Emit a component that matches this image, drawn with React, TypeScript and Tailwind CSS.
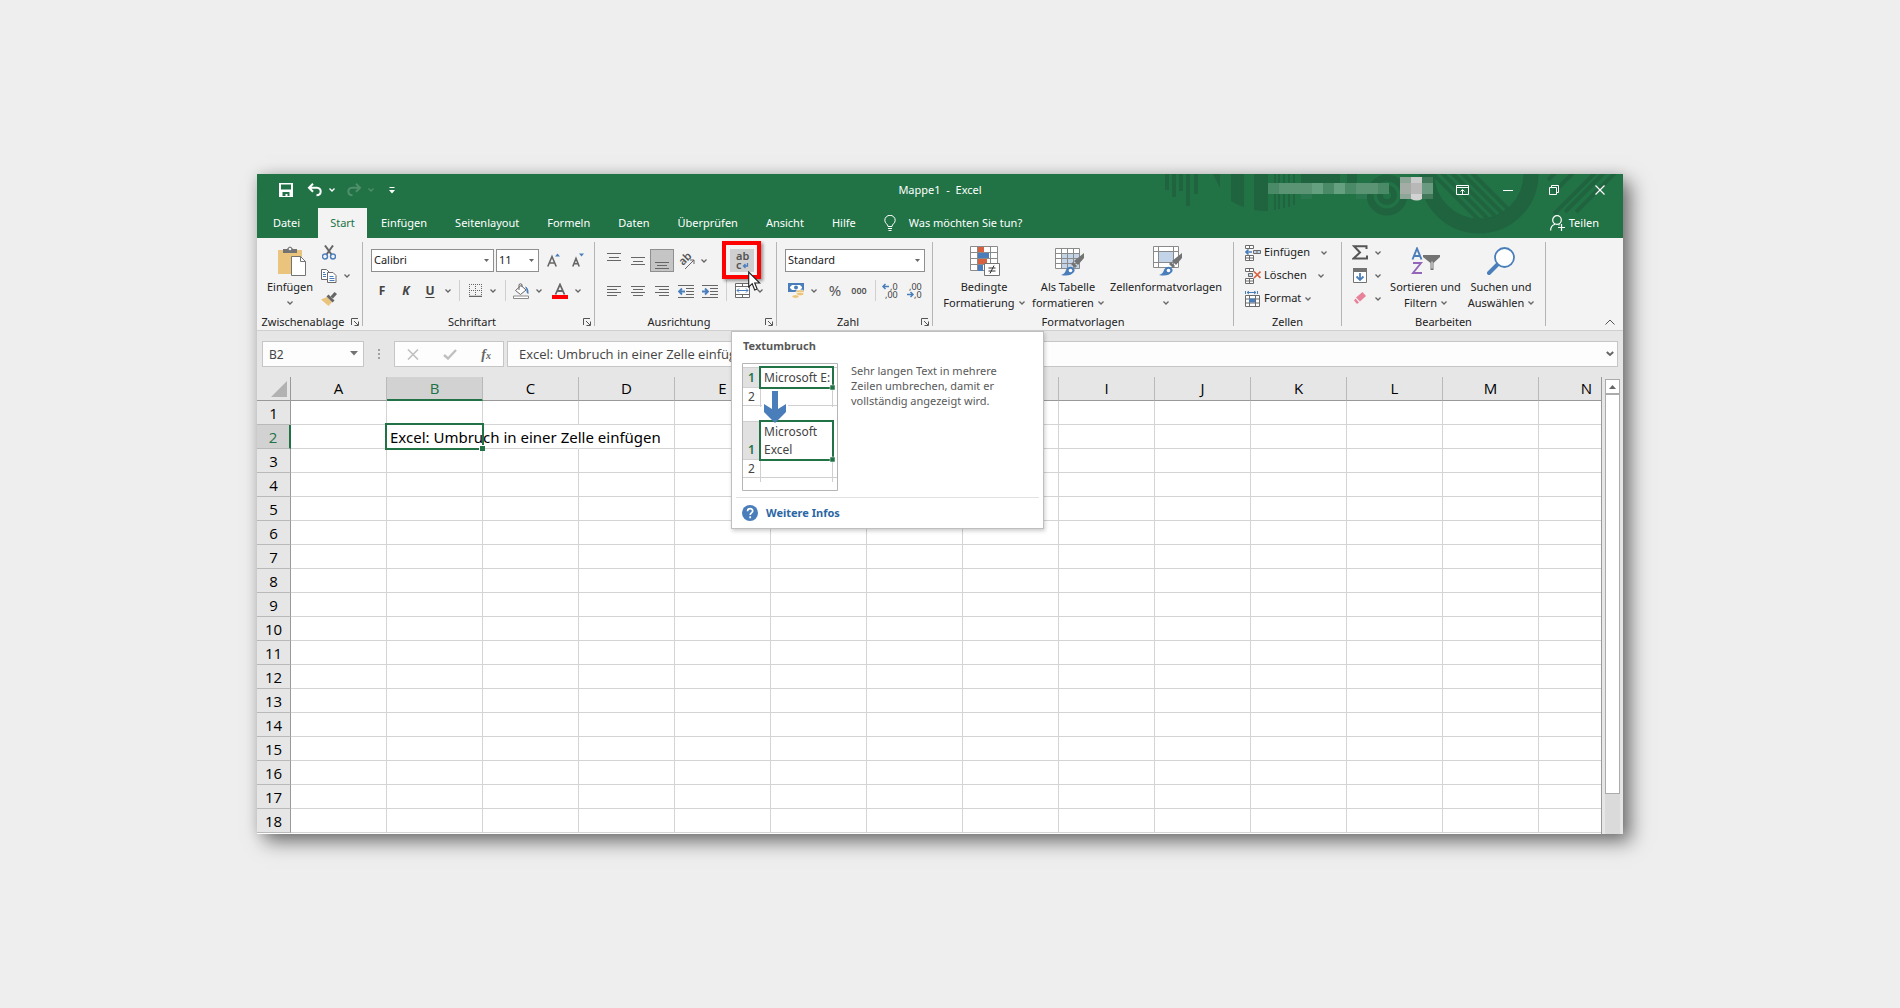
import type { ReactNode } from "react";
import clsx from "clsx";

const columns = ["A", "B", "C", "D", "E", "F", "G", "H", "I", "J", "K", "L", "M", "N"];
const rows = Array.from({ length: 18 }, (_, i) => i + 1);

const tabs = [
  "Einfügen",
  "Seitenlayout",
  "Formeln",
  "Daten",
  "Überprüfen",
  "Ansicht",
  "Hilfe",
];

const Chevron = () => (
  <svg width="6" height="4" viewBox="0 0 6 4" fill="none" className="shrink-0">
    <path d="M.5.5 3 3 5.500.5" stroke="currentColor" strokeWidth="1.300" />
  </svg>
);

const Separator = () => (
  <div className="flex justify-center w-2">
    <div className="w-px h-[21px] bg-[#d0d0d0]" />
  </div>
);

const Tool = ({
  label,
  active,
  children,
}: {
  label: string;
  active?: boolean;
  children: ReactNode;
}) => (
  <button
    aria-label={label}
    className={clsx(
      "flex items-center justify-center w-6 h-[23px] border",
      active ? "bg-[#c5c5c5] border-[#8f8f8f]" : "border-transparent"
    )}
  >
    {children}
  </button>
);

const More = ({ label }: { label: string }) => (
  <button
    aria-label={`${label}: weitere Optionen`}
    className="flex items-center justify-center w-3 h-[23px] text-[#666]"
  >
    <Chevron />
  </button>
);

const Dropdown = ({
  label,
  value,
  className,
}: {
  label: string;
  value: string;
  className: string;
}) => (
  <div className={clsx("relative h-[23px]", className)}>
    <select
      aria-label={label}
      defaultValue={value}
      className="w-full h-full pl-[2px] text-[#222] bg-white border border-[#8f8f8f] appearance-none"
    >
      <option>{value}</option>
    </select>
    <svg
      width="5"
      height="3"
      viewBox="0 0 5 3"
      className="absolute top-[10px] right-[5px] pointer-events-none"
    >
      <path d="M0 0h5L2.500 3z" fill="#666" />
    </svg>
  </div>
);

const Group = ({
  title,
  width,
  launcher,
  children,
}: {
  title: string;
  width: string;
  launcher?: boolean;
  children: ReactNode;
}) => (
  <section aria-label={title} className={clsx("relative flex shrink-0", width)}>
    <div className="flex flex-col flex-1 min-w-0">
      <div className="flex-1">{children}</div>
      <div className="flex items-center h-4">
        <h2 className={clsx("flex-1 text-center whitespace-nowrap", launcher && "pr-[2px]")}>
          {title}
        </h2>
        {launcher && (
          <button aria-label={`${title}: Einstellungen`} className="w-[11px]">
            <svg width="8" height="8" viewBox="0 0 8 8" fill="none" stroke="#555">
              <path d="M.5 7V.5H7M3 3l4 4M7.500 3.500v4h-4" />
            </svg>
          </button>
        )}
      </div>
    </div>
    <div className="w-px h-[84px] mt-1 bg-[#b5b5b5]" />
  </section>
);

const BigButton = ({
  lines,
  width,
  children,
}: {
  lines: string[];
  width: string;
  children: ReactNode;
}) => (
  <button className={clsx("flex flex-col items-center pt-[7px] whitespace-nowrap leading-4", width)}>
    <span className="flex items-center justify-center h-8 mb-[2px]">{children}</span>
    <span>{lines[0]}</span>
    <span className="flex items-center gap-1 h-4">
      {lines[1]}
      <span className="text-[#666]">
        <Chevron />
      </span>
    </span>
  </button>
);

const SmallButton = ({
  label,
  text,
  more = true,
  children,
}: {
  label: string;
  text?: string;
  more?: boolean;
  children: ReactNode;
}) => (
  <button aria-label={label} className="flex items-center h-[23px] gap-[3px]">
    <span className="flex justify-center w-4">{children}</span>
    {text}
    {more && (
      <span className={clsx("text-[#666]", text === "Format" ? "pl-px" : text ? "pl-2" : "pl-1")}>
        <Chevron />
      </span>
    )}
  </button>
);

const Lines = ({ y, wide, narrow }: { y: number[]; wide: [number, number]; narrow: [number, number] }) => (
  <svg width="16" height="16" viewBox="0 0 16 16" stroke="#666" fill="none">
    {y.map((top, i) => {
      const [from, to] = i % 2 ? narrow : wide;
      return <path key={top} d={`M${from} ${top + 0.5}H${to}`} />;
    })}
  </svg>
);

const HeaderArt = () => (
  <svg
    width="460"
    height="64"
    viewBox="0 0 460 64"
    className="absolute top-0 right-0 pointer-events-none"
    aria-hidden="true"
  >
    <defs>
      <clipPath id="disc">
        <circle cx="316" cy="0" r="46" />
      </clipPath>
    </defs>
    <g fill="#20633f">
      <path d="M2 0h4v16H2zM9 0h4v23H9zM16 0h4v17h-4zM23 0h4v32h-4zM31 0h4v20h-4z" />
      <path d="M50 0h7v14zM68 0h13v33q-7-2-13-6zM91 0h14v37q-7 0-14-1z" />
      <path d="M111 0h2v36h-2zM115 0h2v35h-2zM120 0h2v34h-2zM125 0h2v33h-2zM130 0h2v31h-2z" />
      <path d="M138 0h39v9h-39zM184 0h10v9h-10z" />
    </g>
    <g fill="none" stroke="#20633f">
      <circle cx="224" cy="21" r="17" strokeWidth="7" />
      <circle cx="224" cy="21" r="7" strokeWidth="6" />
      <circle cx="316" cy="0" r="52" strokeWidth="15" />
      <path
        clipPath="url(#disc)"
        strokeWidth="4"
        d="M262-8l60 60M272-8l60 60M282-8l60 60M292-8l60 60M302-8l60 60"
      />
      <path strokeWidth="4" d="M385 6l8-8M391 18l20-20M391 40l42-42M402 38l40-40M413 38l40-40" />
    </g>
    <g>
      <path d="M105 9h121v11H105z" fill="#4b8a67" />
      <path d="M116 9h33v11h-33zM193 9h22v11h-22z" fill="#5a9474" />
      <path d="M149 9h11v11h-11zM171 9h11v11h-11z" fill="#65a080" />
      <path d="M138 20h11v5h-11zM193 20h11v5h-11z" fill="#2b7850" />
      <path d="M237 3h11v22h-11z" fill="#8ea697" />
      <path d="M237 9h11v11h-11z" fill="#a3aca5" />
      <path d="M248 3h11v6h-11z" fill="#c9ccca" />
      <path d="M248 9h11v11h-11z" fill="#b9b8b8" />
      <path d="M248 20h11v5q-5 3-11 0z" fill="#d2d2d2" />
      <path d="M259 3h11v22h-11z" fill="#41795a" />
      <path d="M259 9h11v11h-11z" fill="#6a9a80" />
    </g>
  </svg>
);

const TitleBar = () => (
  <div className="relative grid grid-cols-[1fr_auto_1fr] items-center h-[34px] pb-[2px]">
    <div className="flex items-center pl-[21px]">
      <button aria-label="Speichern" className="w-4">
        <svg width="16" height="16" viewBox="0 0 16 16">
          <path d="M1 1h14v14H1z" fill="#fff" />
          <path d="M3 2.500h10v5H3zM4.500 10h7v4h-2v-2h-2v2h-3z" fill="#217346" />
        </svg>
      </button>
      <button aria-label="Rückgängig" className="flex items-center gap-[6px] ml-[13px]">
        <svg width="16" height="14" viewBox="0 0 16 14" fill="none" stroke="#fff" strokeWidth="2">
          <path d="M6 .8 2 4.800l4 4M2.500 4.800H10c5 0 5 7.500-.5 7.500" />
        </svg>
        <Chevron />
      </button>
      <button aria-label="Wiederholen" className="flex items-center gap-[6px] ml-[11px] text-[#4f8f6b]">
        <svg width="16" height="14" viewBox="0 0 16 14" fill="none" stroke="#4f8f6b" strokeWidth="2">
          <path d="m10 .8 4 4-4 4M13.500 4.800H6c-5 0-5 7.500.5 7.500" />
        </svg>
        <Chevron />
      </button>
      <button aria-label="Schnellzugriff anpassen" className="ml-[15px]">
        <svg width="6" height="7" viewBox="0 0 6 7" fill="#fff">
          <path d="M.5 0h5v1h-5zM0 3h6L3 6.500z" />
        </svg>
      </button>
    </div>
    <h1 className="whitespace-pre">Mappe1  -  Excel</h1>
    <div className="flex justify-end">
      <button aria-label="Menüband-Anzeigeoptionen" className="flex justify-center w-[46px]">
        <svg width="13" height="10" viewBox="0 0 13 10" fill="none" stroke="#fff">
          <path d="M.5.5h12v9H.5zM.5 2.500h12M6.500 9V5M4.500 6.500l2-2 2 2" />
        </svg>
      </button>
      <button aria-label="Minimieren" className="flex items-center justify-center w-[46px]">
        <svg width="10" height="1">
          <path d="M0 0h10v1H0z" fill="#fff" />
        </svg>
      </button>
      <button aria-label="Verkleinern" className="flex justify-center w-[46px]">
        <svg width="10" height="10" viewBox="0 0 10 10" fill="none" stroke="#fff">
          <path d="M.5 2.500h7v7h-7zM2.500 2V.5h7v7H8" />
        </svg>
      </button>
      <button aria-label="Schließen" className="flex justify-center w-[46px]">
        <svg width="10" height="10" viewBox="0 0 10 10" stroke="#fff" strokeWidth="1.200">
          <path d="m.5.5 9 9M9.500.5l-9 9" />
        </svg>
      </button>
    </div>
  </div>
);

const TabBar = () => (
  <nav className="relative flex items-center h-[30px]">
    <a href="#datei" className="w-[61px] pr-[2px] text-center">
      Datei
    </a>
    <a
      href="#start"
      className="flex items-center justify-center w-[49px] h-full text-[#217346] bg-[#f3f3f3]"
    >
      Start
    </a>
    <div className="flex gap-7 ml-[14px]">
      {tabs.map((tab) => (
        <a key={tab} href={`#${tab}`}>
          {tab}
        </a>
      ))}
    </div>
    <button className="flex items-center gap-[13px] ml-7">
      <svg width="12" height="16" viewBox="0 0 12 16" fill="none" stroke="#fff">
        <path d="M4 11.500C4 9 .8 8.500.8 5.300a5.200 5 0 0 1 10.400 0C11.200 8.500 8 9 8 11.500zM4 13.500h4M4.500 15.500h3" />
      </svg>
      Was möchten Sie tun?
    </button>
    <button className="flex items-center gap-1 ml-auto mr-6">
      <svg width="15" height="16" viewBox="0 0 15 16" fill="none" stroke="#fff" strokeWidth="1.200">
        <circle cx="7" cy="5" r="4.300" />
        <path d="M.6 15.500C.6 12 2.500 10 5 9.200M8.500 9.500l1 .8M11.500 9v7M8 12.500h7" />
      </svg>
      Teilen
    </button>
  </nav>
);

const Clipboard = () => (
  <Group title="Zwischenablage" width="w-[106px]" launcher>
    <div className="flex pl-[2px]">
      <BigButton lines={["Einfügen", ""]} width="w-[62px]">
        <svg width="32" height="30" viewBox="-4 0 32 30">
          <path d="M0 4h24v24H0z" fill="#eac47c" />
          <path d="M5 7V3h4q3-5 6 0h4v4z" fill="#737373" />
          <circle cx="12" cy="3" r="1.300" fill="#f3f3f3" />
          <path d="M13.500 10.500h9l5 5v14h-14z" fill="#fff" stroke="#737373" />
          <path d="M22.500 10.500v5h5" fill="none" stroke="#737373" />
        </svg>
      </BigButton>
      <div className="pt-[3px]">
        <SmallButton label="Ausschneiden" more={false}>
          <svg width="14" height="15" viewBox="0 0 14 15" fill="none">
            <path d="m3 .5 6.500 9M11 .5l-6.500 9" stroke="#666" strokeWidth="2" />
            <circle cx="3" cy="11.500" r="2.500" stroke="#4a7ebb" strokeWidth="1.400" />
            <circle cx="11" cy="11.500" r="2.500" stroke="#4a7ebb" strokeWidth="1.400" />
          </svg>
        </SmallButton>
        <SmallButton label="Kopieren">
          <svg width="16" height="14" viewBox="0 0 16 14" fill="#fff" stroke="#6b6b6b">
            <path d="M.5.5h5l3 3v7h-8z" />
            <path d="M6.500 3.500h5.500l3 3v7H6.500z" />
            <path d="M2 3.500h2M2 5.500h3M2 7.500h3M8.500 7.500h4M8.500 9.500h5M8.500 11.500h5" stroke="#4a7ebb" />
          </svg>
        </SmallButton>
        <SmallButton label="Format übertragen" more={false}>
          <svg width="16" height="14" viewBox="0 0 16 14">
            <path d="M0 7.500 6 5l5 5-3.500 4z" fill="#eac47c" />
            <path d="m5.500 4.500 2-2 6 6-2 2z" fill="#666" />
            <path d="m9.500 4.500 4-4.500L16 2l-4 4.500z" fill="#666" />
          </svg>
        </SmallButton>
      </div>
    </div>
  </Group>
);

const Font = () => (
  <Group title="Schriftart" width="w-[232px]" launcher>
    <div className="flex flex-col gap-[7px] pt-[11px] pl-2">
      <div className="flex items-center">
        <Dropdown label="Schriftart" value="Calibri" className="w-[123px]" />
        <Dropdown label="Schriftgrad" value="11" className="w-[43px] ml-[2px]" />
        <div className="flex ml-[3px]">
          <Tool label="Schriftgrad vergrößern">
            <svg width="14" height="16" viewBox="0 0 14 16" className="shrink-0">
              <path d="M.8 13.500 5 3.500l4.200 10M2.400 10h5.200" fill="none" stroke="#666" strokeWidth="1.600" />
              <path d="M8 3.500h5L10.500.5z" fill="#4a7ebb" />
            </svg>
          </Tool>
          <Tool label="Schriftgrad verkleinern">
            <svg width="14" height="16" viewBox="0 0 14 16" className="shrink-0">
              <path d="M1.800 13.500 5 5.500l3.200 8M3 10.800h4" fill="none" stroke="#666" strokeWidth="1.600" />
              <path d="M8 .5h5l-2.500 3z" fill="#4a7ebb" />
            </svg>
          </Tool>
        </div>
      </div>
      <div className="flex items-center -ml-px text-[12px] text-[#444]">
        <Tool label="Fett">
          <b>F</b>
        </Tool>
        <Tool label="Kursiv">
          <b className="italic">K</b>
        </Tool>
        <Tool label="Unterstrichen">
          <b className="underline underline-offset-2">U</b>
        </Tool>
        <More label="Unterstrichen" />
        <div className="flex items-center ml-px">
          <Separator />
          <Tool label="Rahmen">
            <svg width="13" height="13" viewBox="0 0 13 13" fill="none" stroke="#666">
              <path d="M0 .5h13M.5 0v13M12.500 0v13M6.500 0v13M0 6.500h13" strokeDasharray="1 1" />
              <path d="M0 12.500h13" strokeWidth="1.500" />
            </svg>
          </Tool>
          <More label="Rahmen" />
        </div>
        <div className="flex items-center ml-[2px]">
          <Separator />
          <Tool label="Füllfarbe">
            <svg width="16" height="16" viewBox="0 0 16 16" fill="none" className="shrink-0">
              <path d="M2.500 7.500 8 2.500l5 4.500-5.500 4.500z" fill="#fff" stroke="#666" />
              <path d="M6 7V1.500q1.500-1.500 3 0V4" stroke="#666" />
              <path d="M12 3.500q4 1 3.500 7.500Q13 10 13.500 7z" fill="#4a7ebb" />
              <path d="M.5 13h15v2.500H.5z" fill="#fff" stroke="#8a8a8a" />
            </svg>
          </Tool>
          <More label="Füllfarbe" />
        </div>
        <div className="flex ml-[3px]">
          <Tool label="Schriftfarbe">
            <svg width="16" height="16" viewBox="0 0 16 16" className="shrink-0">
              <path d="m3.500 11.500 4.500-10 4.500 10M5 8h6" fill="none" stroke="#666" strokeWidth="1.800" />
              <path d="M0 12h16v4H0z" fill="#f00" />
            </svg>
          </Tool>
          <More label="Schriftfarbe" />
        </div>
      </div>
    </div>
  </Group>
);

const WrapTooltip = () => (
  <div
    role="tooltip"
    className="absolute z-20 left-px top-[82px] w-[313px] h-[198px] flex flex-col text-left text-[#595959] bg-white border border-[#bfbfbf] shadow-[1px_2px_4px_rgba(0,0,0,0.2)]"
  >
    <h3 className="pt-[6px] pl-[11px] leading-4 font-bold">Textumbruch</h3>
    <div className="flex gap-[13px] pt-[9px] pl-[10px]">
      <svg width="96" height="128" viewBox="0 0 96 128" className="shrink-0" fontSize="12">
        <path d="M.5.5h95v127H.5z" fill="#fff" stroke="#b5b5b5" />
        <path d="M1 5h17v19H1zM1 59h17v37H1z" fill="#e1e1e1" />
        <path
          d="M1 4.500h94M1 24.500h17M1 42.500h94M18.500 24v20M90.500 24v20M1 58.500h17M1 96.500h17M1 114.500h94M18.500 97v22M90.500 97v22"
          fill="none"
          stroke="#d0d0d0"
        />
        <path d="M18 4h73v21H18zM18 58h73v39H18z" fill="#fff" stroke="#217346" strokeWidth="2" />
        <path d="M88 22h5v5h-5zM88 94h5v5h-5z" fill="#217346" stroke="#fff" strokeWidth=".5" />
        <path d="M20 36h26v18H20z" fill="#fff" />
        <path d="M30 28h6v18l8-5v8L33 60 22 49v-8l8 5z" fill="#4a7ebb" />
        <text x="22" y="19" fill="#444">Microsoft E:</text>
        <text x="22" y="73" fill="#444">Microsoft</text>
        <text x="22" y="91" fill="#444">Excel</text>
        <text x="6" y="19" fill="#217346" fontWeight="600">1</text>
        <text x="6" y="38" fill="#444">2</text>
        <text x="6" y="91" fill="#217346" fontWeight="600">1</text>
        <text x="6" y="110" fill="#444">2</text>
      </svg>
      <p className="w-[165px] leading-[15px]">
        Sehr langen Text in mehrere Zeilen umbrechen, damit er vollständig angezeigt wird.
      </p>
    </div>
    <a
      href="#hilfe"
      className="flex items-center gap-2 h-8 mx-1 mt-[6px] pl-[6px] font-bold text-[#2b66a5] border-t border-[#e1e1e1]"
    >
      <svg width="16" height="16" viewBox="0 0 16 16" fill="none">
        <circle cx="8" cy="8" r="8" fill="#4a7ebb" />
        <path d="M5.500 6.200c0-3.400 5.200-3.200 5.200-.3 0 2-2.500 1.900-2.500 4M8.200 11.300v2" stroke="#fff" strokeWidth="1.700" />
      </svg>
      Weitere Infos
    </a>
  </div>
);

const Alignment = () => (
  <Group title="Ausrichtung" width="w-[182px]" launcher>
    <div className="flex flex-col gap-[7px] pt-[11px] pl-[7px]">
      <div className="flex items-center">
        <Tool label="Oben ausrichten">
          <Lines y={[0, 4, 7]} wide={[1, 15]} narrow={[3, 13]} />
        </Tool>
        <Tool label="Zentriert ausrichten">
          <Lines y={[4, 8, 11]} wide={[1, 15]} narrow={[3, 13]} />
        </Tool>
        <Tool label="Unten ausrichten" active>
          <Lines y={[9, 12, 15]} wide={[1, 15]} narrow={[3, 13]} />
        </Tool>
        <Tool label="Ausrichtung">
          <svg width="18" height="18" viewBox="0 0 18 18" className="shrink-0 overflow-visible">
            <text x="6" y="14" fontSize="11" fontWeight="600" fill="#555" transform="rotate(-45 6 14)">
              ab
            </text>
            <path d="m8 17 9-9M13 8h4v4" fill="none" stroke="#666" />
          </svg>
        </Tool>
        <More label="Ausrichtung" />
        <div className="relative ml-5">
          <button
            aria-label="Textumbruch"
            className="flex items-center justify-center w-6 h-[23px] bg-[#cfcfcf]"
          >
            <svg width="16" height="18" viewBox="0 0 16 18" className="shrink-0 overflow-visible">
              <text x="2" y="8" fontSize="11" fontWeight="600" fill="#555">ab</text>
              <text x="2" y="17" fontSize="11" fontWeight="600" fill="#555">c</text>
              <path d="M13.500 11v3H10M11.500 12l-2 2 2 2" fill="none" stroke="#4a7ebb" strokeWidth="1.300" />
            </svg>
          </button>
          <div className="absolute z-10 -left-2 -top-2 w-[39px] h-[38px] border-4 border-[#f00] shadow-[2px_2px_3px_rgba(0,0,0,0.4)] pointer-events-none" />
          <svg width="13" height="20" viewBox="0 0 13 20" className="absolute z-30 left-[18px] top-[22px]">
            <path
              d="M.7 1v15l3.500-3.300 2.500 6.300 2.500-1-2.500-6h5z"
              fill="#fff"
              stroke="#222"
              strokeWidth="1.100"
            />
          </svg>
          <WrapTooltip />
        </div>
      </div>
      <div className="flex items-center">
        <Tool label="Linksbündig">
          <Lines y={[3, 6, 9, 12]} wide={[1, 15]} narrow={[1, 11]} />
        </Tool>
        <Tool label="Zentriert">
          <Lines y={[3, 6, 9, 12]} wide={[1, 15]} narrow={[3, 13]} />
        </Tool>
        <Tool label="Rechtsbündig">
          <Lines y={[3, 6, 9, 12]} wide={[1, 15]} narrow={[5, 15]} />
        </Tool>
        <Tool label="Einzug verkleinern">
          <svg width="16" height="14" viewBox="0 0 16 14" fill="none" className="shrink-0">
            <path d="M0 1.500h16M8 4.500h8M8 7.500h8M8 10.500h8M0 13.500h16" stroke="#666" />
            <path d="M7 7.500H1M4 4.500l-3 3 3 3" stroke="#4a7ebb" strokeWidth="1.800" />
          </svg>
        </Tool>
        <Tool label="Einzug vergrößern">
          <svg width="16" height="14" viewBox="0 0 16 14" fill="none" className="shrink-0">
            <path d="M0 1.500h16M8 4.500h8M8 7.500h8M8 10.500h8M0 13.500h16" stroke="#666" />
            <path d="M0 7.500h6M3 4.500l3 3-3 3" stroke="#4a7ebb" strokeWidth="1.800" />
          </svg>
        </Tool>
        <Separator />
        <Tool label="Verbinden und zentrieren">
          <svg width="15" height="15" viewBox="0 0 15 15" fill="#fff" stroke="#6b6b6b" className="shrink-0">
            <path d="M.5.500h14v14H.5zM.5 3.500h14M.5 11.500h14M7.500.5v3M7.500 11.500v3" />
            <path d="M2 7.500h11M4 5.500l-2 2 2 2M11 5.500l2 2-2 2" fill="none" stroke="#4a7ebb" />
          </svg>
        </Tool>
        <More label="Verbinden" />
      </div>
    </div>
  </Group>
);

const NumberFormat = () => (
  <Group title="Zahl" width="w-[156px]" launcher>
    <div className="flex flex-col gap-[7px] pt-[11px] pl-[7px]">
      <Dropdown label="Zahlenformat" value="Standard" className="w-[140px] ml-px" />
      <div className="flex items-center text-[#555]">
        <Tool label="Buchhaltungszahlenformat">
          <svg width="16" height="16" viewBox="0 0 16 16" className="shrink-0">
            <path d="M0 0h16v9H0z" fill="#4a7ebb" />
            <path d="M2 2h12v5H2z" fill="#fff" />
            <path d="M2 2h2L2 4zM12 2h2v2zM2 5l2 2H2zM14 5v2h-2z" fill="#4a7ebb" />
            <circle cx="8" cy="4.500" r="2" fill="#4a7ebb" />
            <ellipse cx="12" cy="8.500" rx="4" ry="1.800" fill="#eac47c" stroke="#fff" strokeWidth=".6" />
            <ellipse cx="12" cy="11" rx="4" ry="1.800" fill="#eac47c" stroke="#fff" strokeWidth=".6" />
            <ellipse cx="7.500" cy="13.500" rx="3.500" ry="1.800" fill="#eac47c" stroke="#fff" strokeWidth=".6" />
          </svg>
        </Tool>
        <More label="Buchhaltungszahlenformat" />
        <div className="flex ml-[3px]">
          <Tool label="Prozentformat">
            <span className="text-[15px]">%</span>
          </Tool>
          <Tool label="1.000er-Trennzeichen">
            <span className="text-[9px] font-semibold">000</span>
          </Tool>
        </div>
        <Separator />
        <Tool label="Dezimalstelle hinzufügen">
          <svg width="18" height="18" viewBox="0 0 18 18" className="shrink-0 overflow-visible" fontSize="9" fill="#444">
            <path d="M7 4.500H1M3.500 2 1 4.500 3.500 7" fill="none" stroke="#4a7ebb" strokeWidth="1.500" />
            <text x="8" y="8">,0</text>
            <text x="3" y="16">,00</text>
          </svg>
        </Tool>
        <Tool label="Dezimalstelle entfernen">
          <svg width="18" height="18" viewBox="0 0 18 18" className="shrink-0 overflow-visible" fontSize="9" fill="#444">
            <text x="3" y="8">,00</text>
            <path d="M1 12.500h6M4.500 10 7 12.500 4.500 15" fill="none" stroke="#4a7ebb" strokeWidth="1.500" />
            <text x="8" y="16">,0</text>
          </svg>
        </Tool>
      </div>
    </div>
  </Group>
);

const Brush = () => (
  <>
    <path d="m29 7v5l-6 7-4-4z" fill="#737373" />
    <path d="m18 16 4 4-2 2-4-4z" fill="#737373" />
    <path d="M6 29q4-1 5-5 2-4 6-3 4 2 2 5-4 5-13 3z" fill="#4a7ebb" />
    <circle cx="15.500" cy="24.500" r="1.800" fill="#fff" />
  </>
);

const Styles = () => (
  <Group title="Formatvorlagen" width="w-[301px]">
    <div className="flex pl-[7px]">
      <BigButton lines={["Bedingte", "Formatierung"]} width="w-[88px]">
        <svg width="32" height="30" viewBox="-2 0 32 30">
          <path d="M.5.500h27v24H.5zM.5 6.500h27M.5 12.500h27M.5 18.500h27M7.500.5v24M20.500.5v24" fill="#fff" stroke="#8a8a8a" />
          <path d="M8 1h6v5H8zM8 13h9v5H8z" fill="#d86140" />
          <path d="M8 7h11v5H8zM8 19h5v6H8z" fill="#4a7ebb" />
          <path d="M14.500 17.500h15v12h-15z" fill="#fff" stroke="#737373" />
          <path d="M18.500 22h7M18.500 25h7M24 19.500l-4 8" stroke="#333" />
        </svg>
      </BigButton>
      <BigButton lines={["Als Tabelle", "formatieren"]} width="w-20">
        <svg width="34" height="30" viewBox="-4 0 34 30">
          <path d="M.5 2.500h24v20H.5z" fill="#fff" />
          <path d="M7 7h18v16H7z" fill="#c3d4e9" />
          <path d="M.5 2.500h24v20H.5zM.5 7.500h24M.5 12.500h24M.5 17.500h24M6.500 2.500v20M12.500 2.500v20M18.500 2.500v20" fill="none" stroke="#8a8a8a" />
          <Brush />
        </svg>
      </BigButton>
      <BigButton lines={["Zellenformatvorlagen", ""]} width="w-[116px]">
        <svg width="34" height="30" viewBox="-4 0 34 30">
          <path d="M.5.500h25v21H.5z" fill="#fff" />
          <path d="M5.500 5.500h15v11h-15z" fill="#c3d4e9" />
          <path d="M.5.500h25v21H.5zM.5 5.500h25M.5 16.500h25M5.500.5v21M20.500.5v21" fill="none" stroke="#8a8a8a" />
          <Brush />
        </svg>
      </BigButton>
    </div>
  </Group>
);

const Cells = () => (
  <Group title="Zellen" width="w-[108px]">
    <div className="pt-[3px] pl-[11px]">
      <SmallButton label="Einfügen" text="Einfügen">
        <svg width="16" height="16" viewBox="0 0 16 16" fill="#fff" stroke="#6b6b6b">
          <path d="M.5.5h8v3h-8zM4.500.5v3M.5 10.500h8v5h-8zM4.500 10.500v5M.5 13h8" />
          <path d="M8.500 5.500h7v3h-7zM12 5.500v3" fill="#c3d4e9" />
          <path d="M7 7H1M3.500 4.500 1 7l2.500 2.500" fill="none" stroke="#4a7ebb" strokeWidth="1.600" />
        </svg>
      </SmallButton>
      <SmallButton label="Löschen" text="Löschen">
        <svg width="16" height="16" viewBox="0 0 16 16" fill="#fff" stroke="#6b6b6b">
          <path d="M.5.5h8v3h-8zM4.500.5v3M.5 10.500h8v5h-8zM4.500 10.500v5M.5 13h8" />
          <path d="M3.500 5.500h4v3h-4z" fill="#c3d4e9" />
          <path d="m9 3.500 6.500 6.500M15.500 3.500 9 10" stroke="#d86140" strokeWidth="1.700" />
        </svg>
      </SmallButton>
      <SmallButton label="Format" text="Format">
        <svg width="16" height="16" viewBox="0 0 16 16" fill="#fff" stroke="#6b6b6b">
          <path d="M.5 4.500h14v11H.5zM.5 8h14M.5 12h14M4.500 4.500v11M10.500 4.500v11" />
          <path d="M4 7.500h6v4H4z" fill="#4a7ebb" stroke="none" />
          <path d="M.5 0v3M12.500 0v3M2 1.500h9M4 0 2 1.500 4 3M9 0l2 1.500L9 3" fill="none" stroke="#4a7ebb" />
        </svg>
      </SmallButton>
    </div>
  </Group>
);

const Editing = () => (
  <Group title="Bearbeiten" width="w-[204px]">
    <div className="flex">
      <div className="w-[46px] pt-[3px] pl-[10px]">
        <SmallButton label="AutoSumme">
          <svg width="16" height="15" viewBox="0 0 16 15" className="shrink-0">
            <path d="M14.500 4V1.200H2L8 7.500l-6.500 6H15v-3" fill="none" stroke="#555" strokeWidth="2" />
          </svg>
        </SmallButton>
        <SmallButton label="Füllbereich">
          <svg width="14" height="15" viewBox="0 0 14 15">
            <path d="M.5.500h13v14H.5z" fill="#fff" stroke="#737373" />
            <path d="M0 0h14v4H0z" fill="#737373" />
            <path d="M7 5v7M3.500 8.500 7 12l3.500-3.500" fill="none" stroke="#4a7ebb" strokeWidth="1.800" />
          </svg>
        </SmallButton>
        <SmallButton label="Löschen">
          <svg width="14" height="13" viewBox="0 0 14 13">
            <path d="m9.500 0 3.500 4-6 5.500L3 5.500z" fill="#e8829a" />
            <path d="m2.500 6.500 3.500 4L4 12 1 8.500z" fill="#e8829a" />
          </svg>
        </SmallButton>
      </div>
      <BigButton lines={["Sortieren und", "Filtern"]} width="w-[75px]">
        <svg width="30" height="28" viewBox="0 0 30 28" fill="none">
          <path d="m1.500 12.500 4.500-11 4.500 11M3 9h6" stroke="#4a7ebb" strokeWidth="1.900" />
          <path d="M2 16h8L2 26h9" stroke="#9466b8" strokeWidth="1.900" />
          <path d="M12 8h17v2l-6.500 6v7h-3v-7L12 10z" fill="#737373" />
          <path d="m21 14.500v7" stroke="#f3f3f3" />
        </svg>
      </BigButton>
      <BigButton lines={["Suchen und", "Auswählen"]} width="w-[76px]">
        <svg width="28" height="28" viewBox="0 0 28 28">
          <path d="M2 26 12 16" stroke="#4a7ebb" strokeWidth="4" strokeLinecap="round" />
          <circle cx="17.500" cy="10.500" r="9.500" fill="#fff" stroke="#4a7ebb" strokeWidth="1.800" />
        </svg>
      </BigButton>
    </div>
  </Group>
);

const Ribbon = () => (
  <div className="relative flex h-[93px] bg-[#f3f3f3] border-b border-[#cfcfcf]">
    <Clipboard />
    <Font />
    <Alignment />
    <NumberFormat />
    <Styles />
    <Cells />
    <Editing />
    <button aria-label="Menüband reduzieren" className="self-end ml-auto mr-2 mb-[5px]">
      <svg width="10" height="6" viewBox="0 0 10 6" fill="none" stroke="#555">
        <path d="M.5 5.500 5 1l4.500 4.500" />
      </svg>
    </button>
  </div>
);

const FormulaBar = () => (
  <div className="flex items-center h-[46px] pl-[5px] pr-[5px]">
    <div className="relative w-[102px] h-[26px]">
      <input
        aria-label="Namenfeld"
        defaultValue="B2"
        className="w-full h-full pl-[6px] text-[12px] text-[#444] bg-[#fdfdfd] border border-[#c6c6c6]"
      />
      <svg width="8" height="5" viewBox="0 0 8 5" className="absolute top-[10px] right-[6px]">
        <path d="M0 0h8L4 4.500z" fill="#737373" />
      </svg>
    </div>
    <svg width="2" height="10" viewBox="0 0 2 10" className="mx-[14px]" fill="#a0a0a0">
      <path d="M0 0h2v2H0zM0 4h2v2H0zM0 8h2v2H0z" />
    </svg>
    <div className="flex items-center justify-around w-[110px] h-[26px] mr-[3px] bg-[#fdfdfd] border border-[#c6c6c6]">
      <button aria-label="Abbrechen">
        <svg width="12" height="11" viewBox="0 0 12 11" stroke="#c0c0c0" strokeWidth="1.600">
          <path d="m1 .5 10 10M11 .5l-10 10" />
        </svg>
      </button>
      <button aria-label="Eingeben">
        <svg width="14" height="11" viewBox="0 0 14 11" fill="none" stroke="#c0c0c0" strokeWidth="2.400">
          <path d="m1 6 4 3.500L13 1" />
        </svg>
      </button>
      <button aria-label="Funktion einfügen" className="font-['Liberation_Serif',serif] italic font-bold text-[14px] text-[#666]">
        f<span className="text-[10px]">x</span>
      </button>
    </div>
    <div className="relative flex-1 h-[26px]">
      <input
        aria-label="Bearbeitungsleiste"
        defaultValue="Excel: Umbruch in einer Zelle einfügen"
        className="w-full h-full pl-[11px] font-['Open_Sans',sans-serif] text-[13px] text-[#444] bg-[#fdfdfd] border border-[#c6c6c6]"
      />
      <svg width="8" height="6" viewBox="0 0 8 6" fill="none" className="absolute top-[10px] right-1">
        <path d="m.8 1 3.200 3 3.200-3" stroke="#666" strokeWidth="2" />
      </svg>
    </div>
  </div>
);

const Sheet = () => (
  <div className="flex">
    <div className="flex-1 min-w-0 pb-px overflow-hidden bg-white border-r border-[#999]">
      <table className="w-[1378px] table-fixed border-separate border-spacing-0 font-['Open_Sans',sans-serif] text-[15px] leading-5 text-black">
        <thead>
          <tr className="h-6 bg-[#e6e6e6]">
            <th className="relative w-[34px] p-0 border-r border-b border-[#999]" aria-label="Alles auswählen">
              <svg width="16" height="16" viewBox="0 0 16 16" className="absolute right-[3px] bottom-[3px]">
                <path d="M16 0v16H0z" fill="#b2b2b2" />
              </svg>
            </th>
            {columns.map((column) => (
              <th
                key={column}
                scope="col"
                className={clsx(
                  "w-24 p-0 border-r border-r-[#b9b9b9] font-normal",
                  column === "B"
                    ? "text-[#217346] bg-[#d2d2d2] border-b-2 border-b-[#217346]"
                    : "pb-px border-b border-b-[#999]"
                )}
              >
                {column}
              </th>
            ))}
          </tr>
        </thead>
        <tbody>
          {rows.map((row) => (
            <tr key={row} className="h-6">
              <th
                scope="row"
                className={clsx(
                  "p-0 border-b border-b-[#b9b9b9] font-normal",
                  row === 2
                    ? "text-[#217346] bg-[#d2d2d2] border-r-2 border-r-[#217346]"
                    : "bg-[#e6e6e6] border-r border-r-[#999]"
                )}
              >
                {row}
              </th>
              {columns.map((column) => {
                const selected = row === 2 && column === "B";
                return (
                  <td
                    key={column}
                    className={clsx(
                      "p-0 border-r border-b border-b-[#d4d4d4]",
                      row === 2 && column === "C" ? "border-r-transparent" : "border-r-[#d4d4d4]",
                      selected && "relative"
                    )}
                  >
                    {selected && (
                      <>
                        <span className="relative pl-[3px] whitespace-nowrap font-['Noto_Sans',sans-serif]">
                          Excel: Umbruch in einer Zelle einfügen
                        </span>
                        <div className="absolute -inset-[2px] border-2 border-[#217346]" />
                        <div className="absolute -right-[3px] -bottom-[3px] w-[6px] h-[6px] bg-[#217346] border-t border-l border-white" />
                      </>
                    )}
                  </td>
                );
              })}
            </tr>
          ))}
        </tbody>
      </table>
    </div>
    <div className="flex flex-col w-[21px] pt-[2px] pl-[3px] pr-[3px]">
      <button aria-label="Nach oben" className="flex items-center justify-center h-[15px] bg-white border border-[#ababab]">
        <svg width="7" height="4" viewBox="0 0 7 4">
          <path d="M0 4h7L3.500 0z" fill="#666" />
        </svg>
      </button>
      <div className="flex flex-col flex-1 bg-[#dadada]">
        <div className="flex-[10] bg-white border border-[#ababab]" />
        <div className="flex-1" />
      </div>
    </div>
  </div>
);

export default function App() {
  return (
    <main className="min-h-screen pt-[174px] pb-[174px] pl-[257px] pr-[277px] bg-[#eee] font-['Noto_Sans','Open_Sans',sans-serif] text-[11px] text-[#222]">
      <div className="bg-[#e6e6e6] shadow-[8px_8px_18px_rgba(0,0,0,0.5),0_0_12px_rgba(0,0,0,0.12)]">
        <header className="relative text-white bg-[#217346]">
          <HeaderArt />
          <TitleBar />
          <TabBar />
        </header>
        <Ribbon />
        <FormulaBar />
        <Sheet />
      </div>
    </main>
  );
}
